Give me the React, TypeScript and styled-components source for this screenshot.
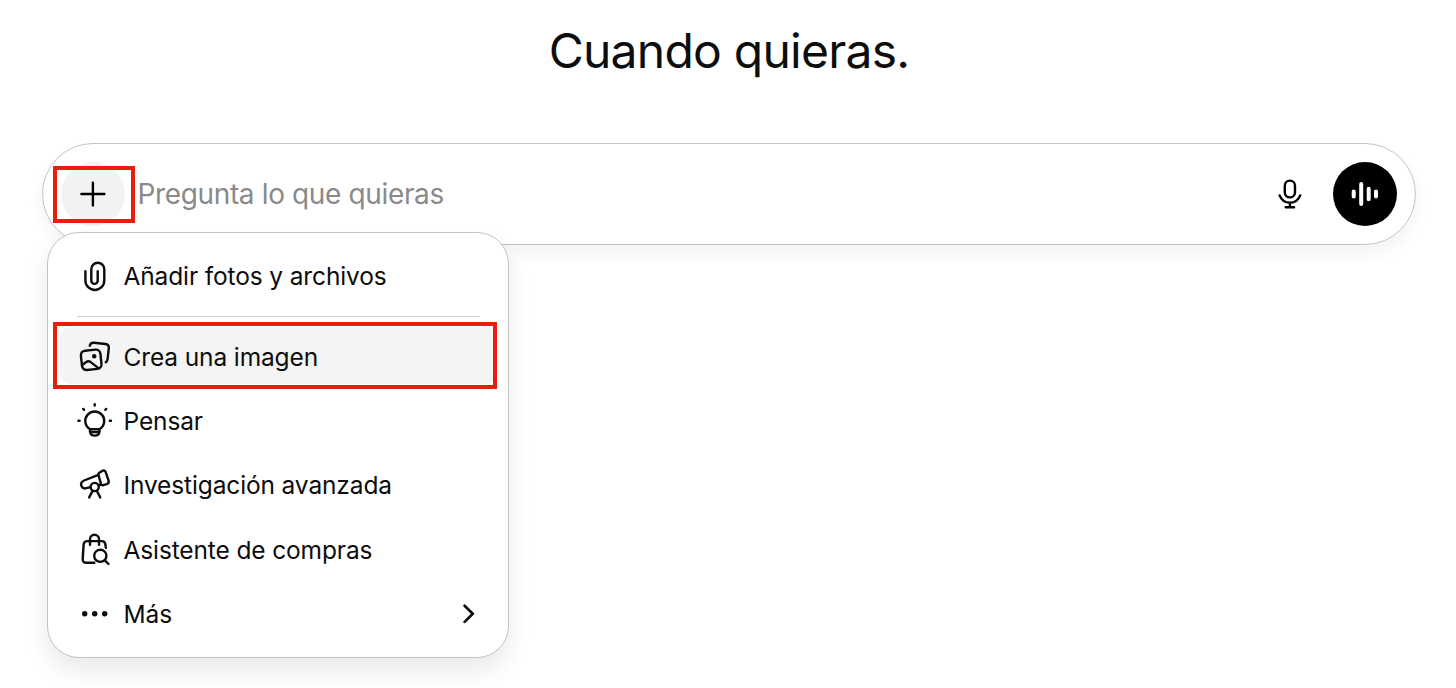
import React from "react";
import styled, { createGlobalStyle } from "styled-components";

const GlobalStyle = createGlobalStyle`
  *, *::before, *::after { box-sizing: border-box; }
  body {
    margin: 0;
    background: #fff;
    color: #0d0d0d;
    font-family: Inter, "Liberation Sans", sans-serif;
    overflow: hidden;
  }
  button { font: inherit; color: inherit; border: 0; background: none; padding: 0; }
`;

const Page = styled.main`
  height: 688px;
  display: flex;
  flex-direction: column;
  padding: 19px 40px 0 42px;
`;

const Title = styled.h1`
  margin: 0;
  height: 64px;
  line-height: 64px;
  text-align: center;
  font-size: 48px;
  font-weight: 400;
  letter-spacing: -0.76px;
`;

const Composer = styled.form`
  position: relative;
  display: flex;
  align-items: center;
  height: 102px;
  margin-top: 60px;
  padding: 0 18px;
  border: 1px solid #c4c4c4;
  border-radius: 51px;
  box-shadow: 0 8px 16px rgba(0, 0, 0, 0.05);
`;

const RoundButton = styled.button<{ $fill?: string }>`
  flex: none;
  display: grid;
  place-items: center;
  width: 64px;
  height: 64px;
  border-radius: 50%;
  color: ${(p) => (p.$fill === "#000" ? "#fff" : "#000")};
  background: ${(p) => p.$fill ?? "transparent"};
`;

const Placeholder = styled.span`
  flex: 1;
  padding-left: 12.5px;
  font-size: 28px;
  line-height: 40px;
  letter-spacing: -0.36px;
  color: #8a8a8a;
`;

const Actions = styled.div`
  display: flex;
  gap: 11px;
`;

const Menu = styled.div`
  position: absolute;
  left: 4px;
  top: 88px;
  width: 462px;
  height: 426px;
  padding: 11px;
  display: flex;
  flex-direction: column;
  background: #fff;
  border: 1px solid #c4c4c4;
  border-radius: 32px;
  box-shadow: 0 12px 24px rgba(0, 0, 0, 0.09);
`;

const MenuItem = styled.div<{ $active?: boolean }>`
  flex: none;
  display: flex;
  align-items: center;
  height: ${(p) => (p.$active ? 57 : 64.4)}px;
  margin: ${(p) => (p.$active ? "0 0 4.4px" : "0")};
  padding: ${(p) => (p.$active ? "2px 8px 0 16px" : "0 8px 0 16px")};
  border-radius: 12px;
  background: ${(p) => (p.$active ? "#f4f4f4" : "transparent")};
`;

const Label = styled.span`
  flex: 1;
  padding-left: 8.5px;
  font-size: 24.5px;
  line-height: 36px;
  letter-spacing: -0.13px;
  color: #0d0d0d;
`;

const Divider = styled.hr`
  flex: none;
  width: 403px;
  height: 1px;
  margin: 8px 0 10px 18px;
  border: 0;
  background: #d2d2d2;
`;

const Outline = styled.div<{ $x: number; $y: number; $w: number; $h: number }>`
  position: absolute;
  left: ${(p) => p.$x}px;
  top: ${(p) => p.$y}px;
  width: ${(p) => p.$w}px;
  height: ${(p) => p.$h}px;
  border: 4px solid #e61e0a;
  pointer-events: none;
`;

const Glyph = styled.svg`
  flex: none;
  display: block;
  width: 40px;
  height: 40px;
  fill: none;
  stroke: currentColor;
  stroke-width: 2.4;
  stroke-linecap: round;
  stroke-linejoin: round;
`;

const Icon = ({ children }: { children: React.ReactNode }) => (
  <Glyph viewBox="0 0 40 40" aria-hidden="true">{children}</Glyph>
);

const PlusIcon = () => (
  <Icon><path d="M19.9 8.6V31.4M8.4 20H31.4" /></Icon>
);

const MicIcon = () => (
  <Icon>
    <rect x="14.8" y="6.6" width="10.2" height="16.8" rx="5.1" />
    <path d="M9.6 21.4C11.4 26 15.2 28.7 19.9 28.7S28.4 26 30.2 21.4M19.9 28.7V33.2M15.7 33.2H24.1" />
  </Icon>
);

const VoiceIcon = () => (
  <Icon>
    <path strokeWidth="4" d="M8.7 17.5V22.5M16.2 10V30M23.7 14.8V25.2M31 17.5V22.5" />
  </Icon>
);

const ClipIcon = () => (
  <Icon><path d="M10.4 15.2V24.5a9.45 9.45 0 0 0 18.9 0V13.2a6.5 6.5 0 0 0-13 0V24.7a3.2 3.2 0 0 0 6.4 0V15.2" /></Icon>
);

const ImageIcon = () => (
  <Icon>
    <rect x="6.4" y="13.1" width="19.6" height="19.4" rx="4.6" transform="rotate(-6 16.2 22.8)" />
    <path d="M7.3 28L11 25.1Q13.3 23.4 15.7 25.1L23.5 31.1M14.8 8.8Q15.4 5.5 19 5.8L30.5 7Q34.2 7.5 33.8 11.2L32.6 21.8Q32.3 24.2 30.8 25.3" />
    <circle cx="19.2" cy="19.2" r="2.2" fill="currentColor" stroke="none" />
  </Icon>
);

const BulbIcon = () => (
  <Icon>
    <path d="M15 28.2A9.5 9.5 0 1 1 24.5 28.2ZM15 28.2V30.6Q15.4 34.6 19.75 34.6T24.5 30.6V28.2M15.6 31.1H23.9" />
    <path d="M19.7 3.1V4.5M8.2 7.9L9.1 8.8M31.2 7.9L30.3 8.8M3.4 19.8H4.6M34.8 19.8H36" />
  </Icon>
);

const TelescopeIcon = () => (
  <Icon>
    <path d="M23.4 9.9L9.1 15.5Q5.2 17.1 6.3 20.7Q7.6 24.2 11.3 23.2L15.5 22.2M23.9 20.2L26.2 19.7" />
    <path d="M23.4 9.9Q23.1 8.7 24.3 7.8L27.2 5.9Q29.6 4.7 30.7 7.2L33.6 15.6Q34.3 18.3 31.7 19.2L28.2 20.2Q26.6 20.5 26.1 19.1Z" />
    <circle cx="19.7" cy="22" r="4.1" />
    <path d="M17.6 25.8L14.2 32.4M21.8 25.8L25.2 32.4" />
  </Icon>
);

const BagIcon = () => (
  <Icon>
    <path d="M19.3 32.8H11.5Q7.4 32.8 7.7 28.8L8.6 14.7Q8.9 11.1 12.3 11.1H26.7Q30 11.1 30.4 14.5L30.8 17.9M15 14.7V9.2a4.5 4.5 0 0 1 9 0V14.7" />
    <circle cx="25.3" cy="25.8" r="6.1" />
    <path d="M29.8 30.3L33.5 34" />
  </Icon>
);

const DotsIcon = () => (
  <Icon>
    <g fill="currentColor" stroke="none">
      <circle cx="9.7" cy="19.8" r="2.7" />
      <circle cx="19.7" cy="19.8" r="2.7" />
      <circle cx="29.7" cy="19.8" r="2.7" />
    </g>
  </Icon>
);

const ChevronIcon = () => (
  <Icon><path strokeWidth="2.7" d="M15.6 11.7L23.8 19.8L15.6 27.9" /></Icon>
);

const tools = [
  { label: "Pensar", icon: <BulbIcon /> },
  { label: "Investigación avanzada", icon: <TelescopeIcon /> },
  { label: "Asistente de compras", icon: <BagIcon /> },
];

export default function App() {
  return (
    <>
      <GlobalStyle />
      <Page>
        <Title>Cuando quieras.</Title>
        <Composer>
          <RoundButton type="button" $fill="#f2f2f2" aria-label="Añadir"><PlusIcon /></RoundButton>
          <Placeholder>Pregunta lo que quieras</Placeholder>
          <Actions>
            <RoundButton type="button" aria-label="Dictar"><MicIcon /></RoundButton>
            <RoundButton type="button" $fill="#000" aria-label="Voz"><VoiceIcon /></RoundButton>
          </Actions>
          <Menu>
            <MenuItem><ClipIcon /><Label>Añadir fotos y archivos</Label></MenuItem>
            <Divider />
            <MenuItem $active><ImageIcon /><Label>Crea una imagen</Label></MenuItem>
            {tools.map((t) => (
              <MenuItem key={t.label}>{t.icon}<Label>{t.label}</Label></MenuItem>
            ))}
            <MenuItem><DotsIcon /><Label>Más</Label><ChevronIcon /></MenuItem>
          </Menu>
          <Outline $x={10} $y={22} $w={82} $h={57} />
          <Outline $x={10} $y={178} $w={444} $h={67} />
        </Composer>
      </Page>
    </>
  );
}
